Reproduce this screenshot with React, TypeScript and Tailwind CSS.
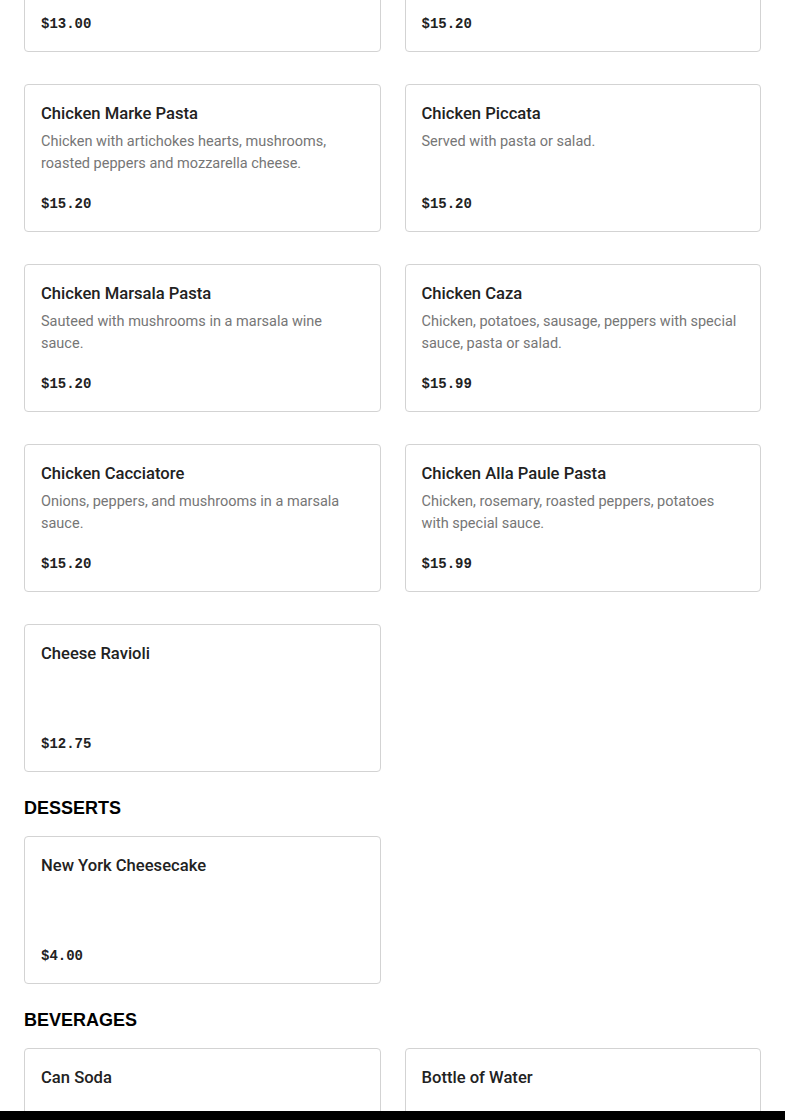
import React from "react";

type Item = { name: string; desc?: string; price: string };

const SECTIONS: { title?: string; items: Item[] }[] = [
  {
    items: [
      { name: "Chicken Parmigiana", desc: "Served with pasta or salad.", price: "$13.00" },
      { name: "Chicken Francese", desc: "Served with pasta or salad.", price: "$15.20" },
      {
        name: "Chicken Marke Pasta",
        desc: "Chicken with artichokes hearts, mushrooms, roasted peppers and mozzarella cheese.",
        price: "$15.20",
      },
      { name: "Chicken Piccata", desc: "Served with pasta or salad.", price: "$15.20" },
      { name: "Chicken Marsala Pasta", desc: "Sauteed with mushrooms in a marsala wine sauce.", price: "$15.20" },
      {
        name: "Chicken Caza",
        desc: "Chicken, potatoes, sausage, peppers with special sauce, pasta or salad.",
        price: "$15.99",
      },
      { name: "Chicken Cacciatore", desc: "Onions, peppers, and mushrooms in a marsala sauce.", price: "$15.20" },
      {
        name: "Chicken Alla Paule Pasta",
        desc: "Chicken, rosemary, roasted peppers, potatoes with special sauce.",
        price: "$15.99",
      },
      { name: "Cheese Ravioli", price: "$12.75" },
    ],
  },
  { title: "DESSERTS", items: [{ name: "New York Cheesecake", price: "$4.00" }] },
  {
    title: "BEVERAGES",
    items: [
      { name: "Can Soda", price: "$1.50" },
      { name: "Bottle of Water", price: "$1.50" },
    ],
  },
];

function MenuCard({ item }: { item: Item }) {
  return (
    <div className="flex h-[148px] flex-col rounded border border-[#d3d3d3] bg-white px-4 pt-[17px] pb-[15px]">
      <h3 className="text-[16.6px] leading-6 font-medium text-[#222]">{item.name}</h3>
      {item.desc && (
        <p className="mt-[5px] text-[14.5px] leading-[22px] text-[#767676]">{item.desc}</p>
      )}
      <span className="mt-auto font-['Liberation_Mono',monospace] text-[14px] leading-6 font-bold text-[#222]">
        {item.price}
      </span>
    </div>
  );
}

export default function App() {
  return (
    <div className="min-h-screen bg-white font-['Roboto',sans-serif]">
      <div className="-mt-[96px] px-6">
        {SECTIONS.map((sec, i) => (
          <section key={i} className={sec.title ? "mt-6" : ""}>
            {sec.title && (
              <h2 className="mb-4 font-['Liberation_Sans',sans-serif] text-[18px] leading-6 font-black text-black">
                {sec.title}
              </h2>
            )}
            <div className="grid grid-cols-2 gap-x-6 gap-y-8">
              {sec.items.map((item) => (
                <MenuCard key={item.name} item={item} />
              ))}
            </div>
          </section>
        ))}
      </div>
      <div className="fixed right-0 bottom-0 left-0 h-[9px] bg-black" />
    </div>
  );
}
